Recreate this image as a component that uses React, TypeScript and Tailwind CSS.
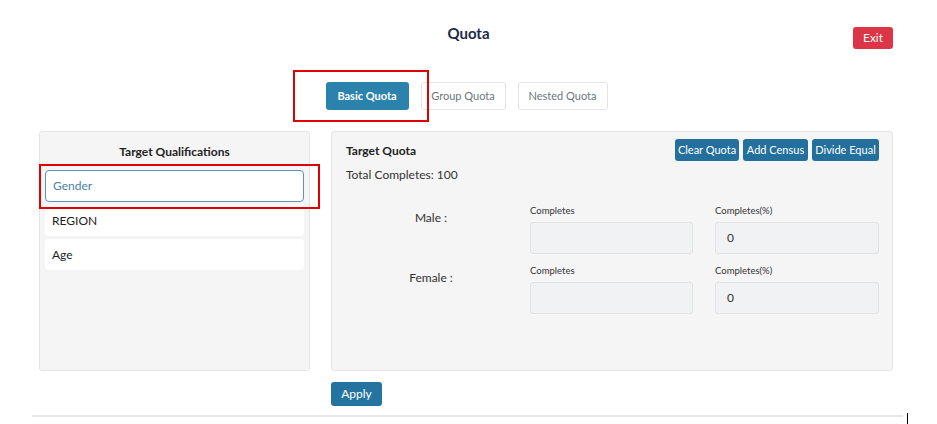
import React from "react";

const tabs = [
  { label: "Basic Quota", w: "w-[83px]" },
  { label: "Group Quota", w: "w-[85px]" },
  { label: "Nested Quota", w: "w-[90px]" },
];
const qualifications = ["Gender", "REGION", "Age"];
const rows = ["Male :", "Female :"];
const actions = [
  { label: "Clear Quota", w: "w-[64px]" },
  { label: "Add Census", w: "w-[65px]" },
  { label: "Divide Equal", w: "w-[67px]" },
];

function QuotaRow({ label }: { label: string }) {
  return (
    <div className="flex h-[60px]">
      <div className="w-[198px] pt-[4px] text-center text-[12px] text-[#333]">{label}</div>
      <div className="w-[163px]">
        <div className="h-[17px] text-[9.5px] leading-[12px] text-[#333]">Completes</div>
        <div className="h-[32px] rounded-[3px] border border-[#e2e3e5] bg-[#f1f2f4]" />
      </div>
      <div className="ml-[22px] w-[164px]">
        <div className="h-[17px] text-[9.5px] leading-[12px] text-[#333]">Completes(%)</div>
        <div className="flex h-[32px] items-center rounded-[3px] border border-[#e2e3e5] bg-[#f1f2f4] pl-[11px] text-[12px] text-[#333]">
          0
        </div>
      </div>
    </div>
  );
}

export default function App() {
  return (
    <div className="relative h-[424px] w-[937px] overflow-hidden bg-white font-['Lato',sans-serif] text-[#212529]">
      <div className="ml-[32px] w-[873px]">
        <div className="grid h-[65px] grid-cols-[1fr_auto_1fr] items-start pt-[20px]">
          <div />
          <h1 className="pt-[2px] text-[15px] font-bold text-[#1c2a48]">Quota</h1>
          <div className="flex justify-end pr-[12px] pt-[7px]">
            <button className="h-[22px] w-[40px] rounded-[3px] bg-[#dc3545] text-[12px] text-white">Exit</button>
          </div>
        </div>

        <div className="mt-[17px] flex justify-center gap-[12px] pr-[4px]">
          {tabs.map((t, i) => (
            <button
              key={t.label}
              className={
                i === 0
                  ? `h-[28px] ${t.w} rounded-[3px] bg-[#2a82ad] text-[11px] font-bold text-white`
                  : `h-[28px] ${t.w} rounded-[3px] border border-[#e4e4e4] bg-white text-[11px] text-[#6c757d]`
              }
            >
              {t.label}
            </button>
          ))}
        </div>

        <div className="mt-[21px] flex gap-[21px] pl-[7px]">
          <div className="h-[240px] w-[271px] rounded-[3px] border border-[#e5e5e5] bg-[#f5f5f5] px-[5px]">
            <div className="pt-[11px] text-center text-[12px] font-bold text-[#222]">Target Qualifications</div>
            <div className="mt-[9px] flex flex-col gap-[3px]">
              {qualifications.map((q, i) => (
                <div
                  key={q}
                  className={
                    i === 0
                      ? "flex h-[32px] items-center rounded-[4px] border border-[#5f93bb] bg-white pl-[7px] text-[12px] text-[#4a7fa8]"
                      : "flex h-[31px] items-center rounded-[4px] bg-white pl-[7px] text-[12px] text-[#222]"
                  }
                >
                  {q}
                </div>
              ))}
            </div>
          </div>

          <div className="flex flex-col">
            <div className="h-[240px] w-[562px] rounded-[3px] border border-[#e5e5e5] bg-[#f5f5f5] pl-[14px] pr-[13px]">
              <div className="flex items-start justify-between pt-[7px]">
                <div className="pt-[3px] text-[12px] font-bold text-[#222]">Target Quota</div>
                <div className="flex gap-[4px]">
                  {actions.map((b) => (
                    <button
                      key={b.label}
                      className={`h-[22px] ${b.w} rounded-[3px] bg-[#23709d] text-[11px] text-white`}
                    >
                      {b.label}
                    </button>
                  ))}
                </div>
              </div>
              <div className="mt-[5px] text-[12px] text-[#333]">Total Completes: 100</div>
              <div className="ml-[-14px] mt-[21px] flex flex-col">
                {rows.map((r) => (
                  <QuotaRow key={r} label={r} />
                ))}
              </div>
            </div>
            <button className="mt-[11px] h-[24px] w-[51px] rounded-[3px] bg-[#2574a0] text-[12px] text-white">
              Apply
            </button>
          </div>
        </div>

        <div className="mt-[9px] h-[2px] w-[871px] bg-[#e8e8e8]" />
      </div>

      <div className="absolute left-[907px] top-[413px] h-[11px] w-[1px] bg-black" />
      <div className="absolute left-[293px] top-[70px] h-[52px] w-[136px] border-2 border-[#e00000]" />
      <div className="absolute left-[39px] top-[164px] h-[45px] w-[281px] border-2 border-[#e00000]" />
    </div>
  );
}
